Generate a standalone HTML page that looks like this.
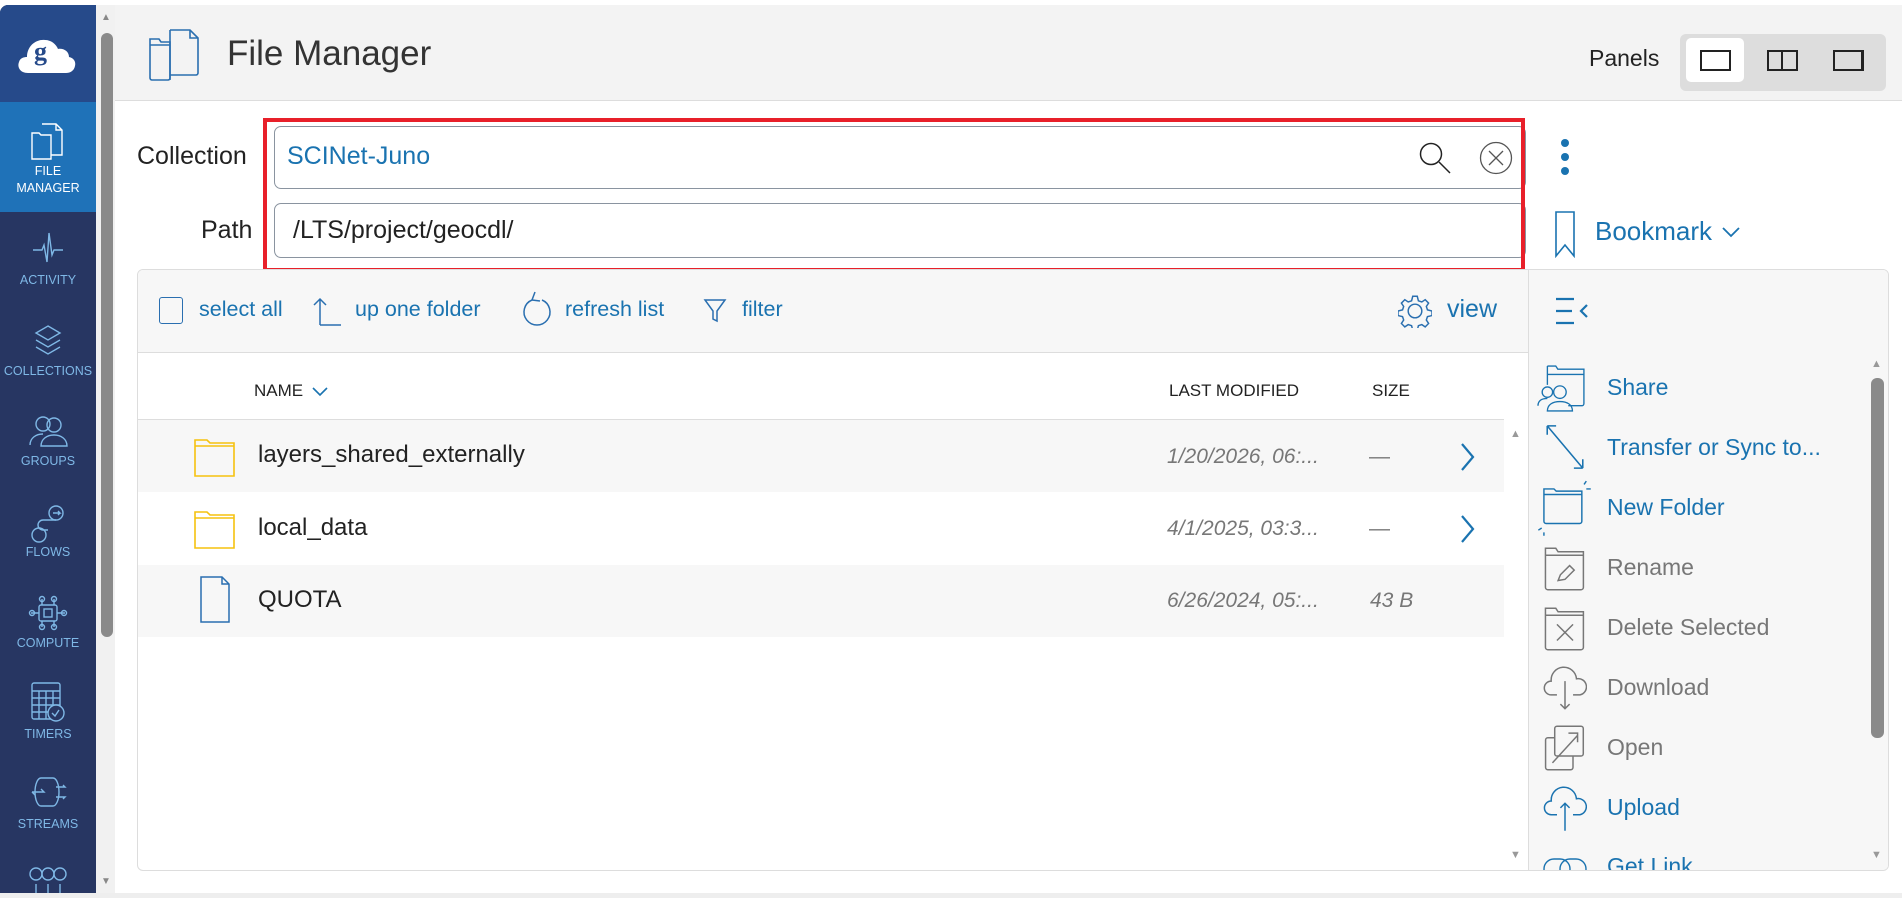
<!DOCTYPE html>
<html><head><meta charset="utf-8"><style>
*{box-sizing:border-box;margin:0;padding:0}
body{width:1902px;height:898px;background:#fff;font-family:"Liberation Sans",sans-serif;position:relative;overflow:hidden;color:#222}
.a{position:absolute}
.side{left:0;top:5px;width:96px;height:893px;background:#273662;border-radius:8px 0 0 0;overflow:hidden}
.ic{position:absolute;left:0;width:96px}
.ic svg{display:block;margin:0 auto}
.lb{position:absolute;left:0;width:96px;text-align:center;color:#7fb8e6;font-size:12.5px;line-height:17px}
.blue{color:#1a73b0}
.t{white-space:nowrap}
.row{position:absolute;left:138px;width:1366px;height:72px}
.act{position:absolute;left:1607px;font-size:23px;color:#1a73b0;white-space:nowrap}
.g{color:#777}
</style></head><body>
<!-- sidebar -->
<div class="a side">
 <div class="a" style="left:0;top:0;width:96px;height:97px;background:#264a8a"></div>
 <svg class="a" style="left:16px;top:22px" width="62" height="52" viewBox="0 0 62 52"><path d="M12 46c-8 0-11-6-9-11 1-4 5-5 8-5 0-11 9-18 18-17 6 0 11 4 13 9 5-1 11 2 11 8 5 1 7 5 6 9-1 5-5 7-9 7z" fill="#fff"/><text x="18" y="33" font-size="26" font-family="Liberation Serif" fill="#264a8a" font-weight="bold">g</text></svg>
 <div class="a" style="left:0;top:97px;width:96px;height:110px;background:#1f72b8"></div>
 <div class="ic" style="top:116px"><svg width="36" height="40" viewBox="0 0 36 40" fill="none" stroke="#fff" stroke-width="1.4"><path d="M2 12h7l2 2h10v24H2z"/><path d="M12 3h14l6 6v25H21"/><path d="M26 3v6h6"/></svg></div>
 <div class="lb" style="top:158px;color:#fff">FILE<br>MANAGER</div>
 <div class="ic" style="top:226px"><svg width="30" height="38" viewBox="0 0 30 38" fill="none" stroke="#7fb8e6" stroke-width="1.4"><path d="M0 19h9l2-5 3 17 2-29 3 22 2-5h9"/></svg></div>
 <div class="lb" style="top:267px">ACTIVITY</div>
 <div class="ic" style="top:318px"><svg width="30" height="36" viewBox="0 0 30 36" fill="none" stroke="#7fb8e6" stroke-width="1.4"><path d="M15 3l12 7-12 7-12-7z"/><path d="M3 17l12 7 12-7"/><path d="M3 24l12 7 12-7"/></svg></div>
 <div class="lb" style="top:358px">COLLECTIONS</div>
 <div class="ic" style="top:408px"><svg width="40" height="36" viewBox="0 0 40 36" fill="none" stroke="#7fb8e6" stroke-width="1.4"><circle cx="15" cy="11" r="7"/><circle cx="26" cy="12" r="7"/><path d="M2 32c0-7 6-11 13-11M13 33c0-7 6-11 13-11s13 4 13 11z"/></svg></div>
 <div class="lb" style="top:448px">GROUPS</div>
 <div class="ic" style="top:497px"><svg width="40" height="44" viewBox="0 0 40 44" fill="none" stroke="#7fb8e6" stroke-width="1.4"><circle cx="28" cy="11" r="7"/><circle cx="11" cy="33" r="7"/><path d="M25 11h7l-2-2M32 11l-2 2M28 18H15a5 5 0 000 10h5"/></svg></div>
 <div class="lb" style="top:539px">FLOWS</div>
 <div class="ic" style="top:590px"><svg width="40" height="36" viewBox="0 0 40 36" fill="none" stroke="#7fb8e6" stroke-width="1.4"><rect x="11" y="10" width="18" height="16" rx="2"/><rect x="16" y="14" width="8" height="8"/><path d="M3 18h8M29 18h8M14 4v6M26 4v6M14 26v6M26 26v6"/><circle cx="4" cy="18" r="2.5"/><circle cx="36" cy="18" r="2.5"/><circle cx="14" cy="4" r="2.5"/><circle cx="26" cy="4" r="2.5"/><circle cx="14" cy="32" r="2.5"/><circle cx="26" cy="32" r="2.5"/></svg></div>
 <div class="lb" style="top:630px">COMPUTE</div>
 <div class="ic" style="top:676px"><svg width="36" height="44" viewBox="0 0 36 44" fill="none" stroke="#7fb8e6" stroke-width="1.4"><rect x="2" y="2" width="28" height="36" rx="2"/><path d="M2 10h28M2 17h28M2 24h28M2 31h18M9 10v28M16 10v28M23 10v14"/><circle cx="26" cy="32" r="8" fill="#273662"/><path d="M22 32l3 3 4-6"/></svg></div>
 <div class="lb" style="top:721px">TIMERS</div>
 <div class="ic" style="top:770px"><svg width="40" height="36" viewBox="0 0 40 36" fill="none" stroke="#7fb8e6" stroke-width="1.4"><path d="M13 3h12a6 14 0 010 28H13a6 14 0 010-28z"/><path d="M4 17h12l-3-3M4 17l3 3M28 12h9l-2-2M28 22h9l-2 2"/></svg></div>
 <div class="lb" style="top:811px">STREAMS</div>
 <div class="ic" style="top:862px"><svg width="40" height="36" viewBox="0 0 40 36" fill="none" stroke="#7fb8e6" stroke-width="1.4"><circle cx="8" cy="7" r="6"/><circle cx="20" cy="7" r="6"/><circle cx="32" cy="7" r="6"/><path d="M8 17v19M20 17v19M32 17v19"/></svg></div>
</div>
<!-- main scrollbar -->
<div class="a" style="left:96px;top:5px;width:19px;height:893px;background:#f1f1f1"></div>
<div class="a" style="left:101px;top:33px;width:12px;height:604px;background:#8a8a8a;border-radius:6px"></div>
<div class="a" style="left:101px;top:12px;font-size:10px;color:#888">▲</div>
<div class="a" style="left:101px;top:876px;font-size:10px;color:#888">▼</div>
<!-- header -->
<div class="a" style="left:115px;top:5px;width:1787px;height:96px;background:#f3f3f3;border-bottom:1px solid #ddd"></div>
<svg class="a" style="left:148px;top:28px" width="54" height="54" viewBox="0 0 54 54" fill="none" stroke="#2a6fb0" stroke-width="1.6"><path d="M2 11h9l2 3h9v36a2 2 0 01-2 2H4a2 2 0 01-2-2z"/><path d="M2 17h20"/><path d="M22 2h20l8 8v35a2 2 0 01-2 2H22"/><path d="M22 2v50M42 2v8h8"/></svg>
<div class="a t" style="left:227px;top:34px;font-size:35px;color:#333">File Manager</div>
<div class="a t" style="left:1589px;top:45px;font-size:23px">Panels</div>
<div class="a" style="left:1680px;top:34px;width:206px;height:57px;background:#ddd;border-radius:6px"></div>
<div class="a" style="left:1686px;top:38px;width:58px;height:44px;background:#fff;border-radius:5px"></div>
<div class="a" style="left:1700px;top:50px;width:31px;height:21px;border:2px solid #222"></div>
<div class="a" style="left:1767px;top:50px;width:16px;height:21px;border:2px solid #222"></div>
<div class="a" style="left:1783px;top:50px;width:15px;height:21px;border:2px solid #222;border-left:0"></div>
<div class="a" style="left:1833px;top:50px;width:31px;height:21px;border:2px solid #222;border-right-width:3px"></div>
<!-- collection / path -->
<div class="a t" style="left:137px;top:142px;font-size:25px">Collection</div>
<div class="a t" style="left:201px;top:216px;font-size:25px">Path</div>
<div class="a" style="left:274px;top:126px;width:1252px;height:63px;border:1px solid #8a94a0;border-radius:7px;background:#fff"></div>
<div class="a" style="left:274px;top:203px;width:1252px;height:55px;border:1px solid #8a94a0;border-radius:7px;background:#fff"></div>
<div class="a t blue" style="left:287px;top:142px;font-size:25px">SCINet-Juno</div>
<div class="a t" style="left:293px;top:216px;font-size:25px">/LTS/project/geocdl/</div>
<svg class="a" style="left:1418px;top:141px" width="34" height="34" viewBox="0 0 34 34" fill="none" stroke="#222" stroke-width="1.5"><circle cx="13" cy="13" r="10.5"/><path d="M21 21l11 11"/></svg>
<svg class="a" style="left:1479px;top:141px" width="34" height="34" viewBox="0 0 34 34" fill="none" stroke="#555" stroke-width="1.3"><circle cx="17" cy="17" r="15.5"/><path d="M10 10l14 14M24 10L10 24"/></svg>
<div class="a" style="left:263px;top:118px;width:1262px;height:154px;border:4px solid #e8202a"></div>
<div class="a" style="left:1561px;top:139px;width:8px;height:8px;border-radius:50%;background:#1a73b0;box-shadow:0 14px 0 #1a73b0,0 28px 0 #1a73b0"></div>
<svg class="a" style="left:1554px;top:211px" width="22" height="47" viewBox="0 0 22 47" fill="none" stroke="#1a73b0" stroke-width="1.6"><path d="M2 1h18v44l-9-11-9 11z"/></svg>
<div class="a t blue" style="left:1595px;top:216px;font-size:26px">Bookmark</div>
<svg class="a" style="left:1721px;top:226px" width="20" height="13" viewBox="0 0 20 13" fill="none" stroke="#1a73b0" stroke-width="1.8"><path d="M2 2l8 8 8-8"/></svg>
<!-- panel -->
<div class="a" style="left:137px;top:269px;width:1752px;height:602px;border:1px solid #ddd;border-radius:6px;background:#fff;overflow:hidden">
 <div class="a" style="left:0;top:0;width:1752px;height:83px;background:#f7f7f7;border-bottom:1px solid #ddd"></div>
 <div class="a" style="left:1390px;top:0;width:362px;height:602px;background:#f7f7f7;border-left:1px solid #ddd"></div>
</div>
<!-- toolbar -->
<div class="a" style="left:159px;top:297px;width:24px;height:27px;border:1.6px solid #2a6fb0;border-radius:3px"></div>
<div class="a t blue" style="left:199px;top:297px;font-size:21.5px">select all</div>
<svg class="a" style="left:312px;top:295px" width="30" height="32" viewBox="0 0 30 32" fill="none" stroke="#2a6fb0" stroke-width="1.5"><path d="M8 30V4M2 10l6-6 6 6M8 30h21"/></svg>
<div class="a t blue" style="left:355px;top:297px;font-size:21.5px">up one folder</div>
<svg class="a" style="left:521px;top:288px" width="32" height="44" viewBox="0 0 32 44" fill="none" stroke="#2a6fb0" stroke-width="1.5"><path d="M11 12a13 13 0 1 0 10 0M11 12l3-8M11 12l8 1"/></svg>
<div class="a t blue" style="left:565px;top:297px;font-size:21.5px">refresh list</div>
<svg class="a" style="left:703px;top:298px" width="24" height="26" viewBox="0 0 24 26" fill="none" stroke="#2a6fb0" stroke-width="1.5"><path d="M2 2h20l-8 11v10l-4-2V13z"/></svg>
<div class="a t blue" style="left:742px;top:297px;font-size:21.5px">filter</div>
<svg class="a" style="left:1398px;top:294px" width="34" height="34" viewBox="0 0 30 30" fill="none" stroke="#2a6fb0" stroke-width="1.3"><circle cx="15" cy="15" r="6"/><path d="M13 2h4l1 4 3 1 3-2 3 3-2 3 1 3 4 1v4l-4 1-1 3 2 3-3 3-3-2-3 1-1 4h-4l-1-4-3-1-3 2-3-3 2-3-1-3-4-1v-4l4-1 1-3-2-3 3-3 3 2 3-1z"/></svg>
<div class="a t blue" style="left:1447px;top:295px;font-size:25px">view</div>
<svg class="a" style="left:1555px;top:297px" width="34" height="28" viewBox="0 0 34 28" fill="none" stroke="#1a73b0" stroke-width="2.2"><path d="M1 2h18M1 14h16M1 26h18M32 8l-6 6 6 6"/></svg>
<!-- header row -->
<div class="a" style="left:138px;top:352px;width:1366px;height:68px;border-bottom:1px solid #ddd"></div>
<div class="a t" style="left:254px;top:381px;font-size:17px">NAME</div>
<svg class="a" style="left:312px;top:386px" width="16" height="11" viewBox="0 0 16 11" fill="none" stroke="#1a73b0" stroke-width="1.6"><path d="M1 2l7 7 7-7"/></svg>
<div class="a t" style="left:1169px;top:381px;font-size:17px">LAST MODIFIED</div>
<div class="a t" style="left:1372px;top:381px;font-size:17px">SIZE</div>
<!-- rows -->
<div class="row" style="top:420px;background:#f7f7f7"></div>
<div class="row" style="top:565px;background:#f7f7f7"></div>
<svg class="a" style="left:193px;top:436px" width="44" height="44" viewBox="0 0 44 44" fill="none" stroke="#f5c20f" stroke-width="1.6"><path d="M2 4h12l3 3h24v33H2z"/><path d="M2 10h39"/></svg>
<svg class="a" style="left:193px;top:508px" width="44" height="44" viewBox="0 0 44 44" fill="none" stroke="#f5c20f" stroke-width="1.6"><path d="M2 4h12l3 3h24v33H2z"/><path d="M2 10h39"/></svg>
<svg class="a" style="left:199px;top:576px" width="32" height="48" viewBox="0 0 32 48" fill="none" stroke="#2a6fb0" stroke-width="1.5"><path d="M2 1h21l7 7v38H2z"/><path d="M23 1v7h7"/></svg>
<div class="a t" style="left:258px;top:441px;font-size:24px">layers_shared_externally</div>
<div class="a t" style="left:258px;top:514px;font-size:24px">local_data</div>
<div class="a t" style="left:258px;top:586px;font-size:24px">QUOTA</div>
<div class="a t g" style="left:1167px;top:445px;font-size:21px;font-style:italic">1/20/2026, 06:...</div>
<div class="a t g" style="left:1167px;top:517px;font-size:21px;font-style:italic">4/1/2025, 03:3...</div>
<div class="a t g" style="left:1167px;top:589px;font-size:21px;font-style:italic">6/26/2024, 05:...</div>
<div class="a t g" style="left:1369px;top:445px;font-size:21px">—</div>
<div class="a t g" style="left:1369px;top:517px;font-size:21px">—</div>
<div class="a t g" style="left:1370px;top:589px;font-size:21px;font-style:italic">43 B</div>
<svg class="a" style="left:1460px;top:442px" width="16" height="30" viewBox="0 0 16 30" fill="none" stroke="#1a73b0" stroke-width="2.2"><path d="M2 2l11 13L2 28"/></svg>
<svg class="a" style="left:1460px;top:514px" width="16" height="30" viewBox="0 0 16 30" fill="none" stroke="#1a73b0" stroke-width="2.2"><path d="M2 2l11 13L2 28"/></svg>
<div class="a" style="left:1510px;top:428px;font-size:11px;color:#999">▲</div>
<div class="a" style="left:1510px;top:849px;font-size:11px;color:#999">▼</div>
<!-- actions -->
<div class="a" style="left:1871px;top:378px;width:13px;height:360px;background:#8a8a8a;border-radius:6px"></div>
<div class="a" style="left:1871px;top:358px;font-size:11px;color:#999">▲</div>
<div class="a" style="left:1871px;top:849px;font-size:11px;color:#999">▼</div>
<svg class="a" style="left:1535px;top:365px" width="54" height="48" viewBox="0 0 48 46" fill="none" stroke="#1a73b0" stroke-width="1.3"><path d="M10 1h8l2 3h25v33a2 2 0 01-2 2H30M10 9h35M10 1v18"/><circle cx="10" cy="26" r="5"/><circle cx="22" cy="26" r="6"/><path d="M1 39c0-5 4-7 9-7M10 44c0-6 5-9 12-9s12 3 12 9z"/></svg>
<div class="act" style="top:374px">Share</div>
<svg class="a" style="left:1545px;top:423px" width="40" height="48" viewBox="0 0 36 42" fill="none" stroke="#1a73b0" stroke-width="1.4"><path d="M2 2l32 38M2 2v8M2 2h8M34 40v-8M34 40h-8"/></svg>
<div class="act" style="top:434px">Transfer or Sync to...</div>
<svg class="a" style="left:1535px;top:480px" width="58" height="58" viewBox="0 0 50 52" fill="none" stroke="#1a73b0" stroke-width="1.3"><path d="M7 8h9l2 2h23v27a2 2 0 01-2 2H9a2 2 0 01-2-2zM7 13h34M43 4l2-3M45 8h4M2 45l3-2M7 47v3"/></svg>
<div class="act" style="top:494px">New Folder</div>
<svg class="a" style="left:1543px;top:546px" width="44" height="46" viewBox="0 0 38 40" fill="none" stroke="#777" stroke-width="1.3"><path d="M2 2h9l2 3h22v31a2 2 0 01-2 2H4a2 2 0 01-2-2zM2 8h33M13 30l2-5 8-8 4 4-8 8z"/></svg>
<div class="act g" style="top:554px">Rename</div>
<svg class="a" style="left:1543px;top:606px" width="44" height="46" viewBox="0 0 38 40" fill="none" stroke="#777" stroke-width="1.3"><path d="M2 2h9l2 3h22v31a2 2 0 01-2 2H4a2 2 0 01-2-2zM2 8h33M12 16l14 14M26 16L12 30"/></svg>
<div class="act g" style="top:614px">Delete Selected</div>
<svg class="a" style="left:1543px;top:665px" width="44" height="46" viewBox="0 0 38 40" fill="none" stroke="#777" stroke-width="1.3"><path d="M12 26H7a6 6 0 010-12 11 11 0 0122-2 6 6 0 013 14h-6M19 14v24M15 34l4 4 4-4"/></svg>
<div class="act g" style="top:674px">Download</div>
<svg class="a" style="left:1543px;top:724px" width="44" height="48" viewBox="0 0 38 42" fill="none" stroke="#777" stroke-width="1.3"><rect x="10" y="2" width="25" height="26" rx="2"/><path d="M10 12H4a2 2 0 00-2 2v24a2 2 0 002 2h20a2 2 0 002-2v-10M8 34L30 10M22 8h8v8"/></svg>
<div class="act g" style="top:734px">Open</div>
<svg class="a" style="left:1543px;top:785px" width="44" height="48" viewBox="0 0 38 42" fill="none" stroke="#1a73b0" stroke-width="1.3"><path d="M12 26H7a6 6 0 010-12 11 11 0 0122-2 6 6 0 013 14h-6M19 40V16M15 20l4-4 4 4"/></svg>
<div class="act" style="top:794px">Upload</div>
<div class="a" style="left:1529px;top:845px;width:340px;height:25px;overflow:hidden">
 <svg class="a" style="left:14px;top:12px" width="44" height="24" viewBox="0 0 44 24" fill="none" stroke="#1a73b0" stroke-width="1.4"><rect x="1" y="2" width="26" height="20" rx="10"/><rect x="17" y="2" width="26" height="20" rx="10"/></svg>
 <div class="a t" style="left:78px;top:8px;font-size:23px;color:#1a73b0">Get Link</div>
</div>
<div class="a" style="left:0;top:893px;width:1902px;height:5px;background:#eee"></div>
</body></html>
